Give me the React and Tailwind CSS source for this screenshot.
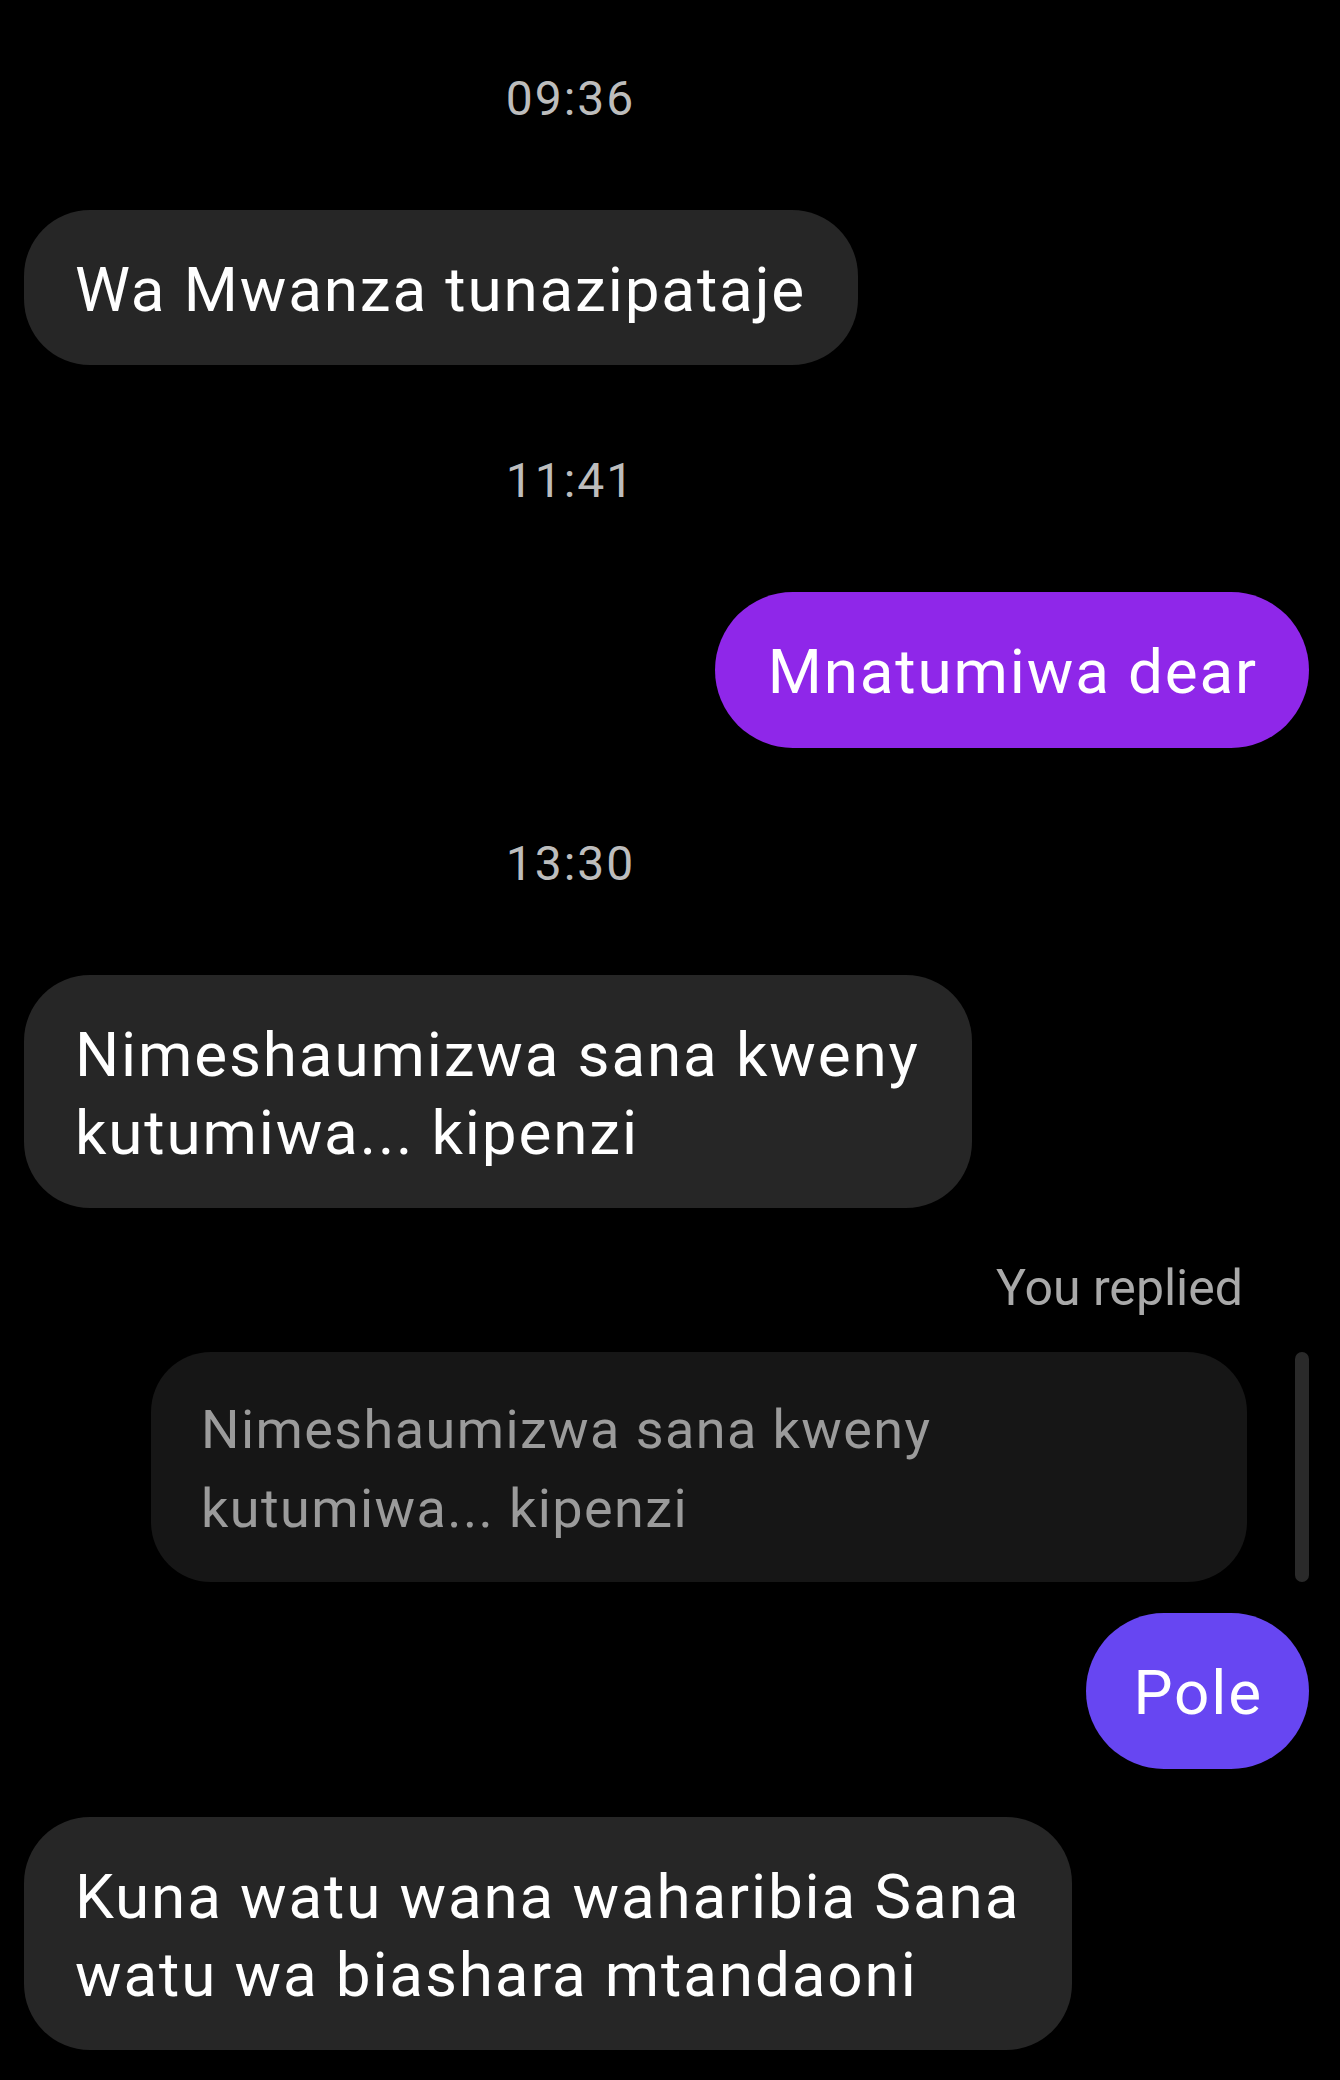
import React from 'react';

const font = { fontFamily: 'Roboto, "Noto Sans", sans-serif' };

const Stamp = ({ time, first }) => (
  <div
    className={`flex justify-center pr-[192px] h-[60px] text-[48px] leading-[60px] tracking-[2px] text-[#bdbdbd] ${first ? 'mt-[69px]' : 'mt-[86px]'} mb-[81px]`}
  >
    {time}
  </div>
);

const Incoming = ({ children }) => (
  <div className="flex justify-start">
    <div className="bg-[#262626] text-white rounded-[66px] pl-[51px] pr-[52px] pt-[41px] pb-[36px] text-[62px] leading-[78px] tracking-[0.03em] whitespace-nowrap">
      {children}
    </div>
  </div>
);

const Outgoing = ({ children, color, tight }) => (
  <div className="flex justify-end">
    <div
      className={`${color} text-white rounded-[80px] ${tight ? 'pl-[48px] pr-[46px]' : 'pl-[53px] pr-[51px]'} pt-[41px] pb-[37px] text-[62px] leading-[78px] tracking-[0.03em] whitespace-nowrap`}
    >
      {children}
    </div>
  </div>
);

export default function App() {
  return (
    <div className="min-h-[2080px] bg-black pl-[24px] pr-[31px] flex flex-col" style={font}>
      <Stamp time="09:36" first />
      <Incoming>Wa Mwanza tunazipataje</Incoming>

      <Stamp time="11:41" />
      <Outgoing color="bg-[#8f27e9]">Mnatumiwa dear</Outgoing>

      <Stamp time="13:30" />
      <Incoming>
        Nimeshaumizwa sana kweny
        <br />
        kutumiwa... kipenzi
      </Incoming>

      {/* reply block */}
      <div className="flex flex-col items-end mt-[50px]">
        <div className="pr-[66px] h-[60px] text-[50px] leading-[60px] text-[#a9a9a9]">You replied</div>
        <div className="flex items-stretch gap-[48px] mt-[34px]">
          <div className="w-[1096px] bg-[#161616] rounded-[60px] pl-[50px] pt-[38px] pb-[34px] text-[54px] leading-[79px] tracking-[0.026em] text-[#9b9b9b]">
            Nimeshaumizwa sana kweny
            <br />
            kutumiwa... kipenzi
          </div>
          <div className="w-[14px] rounded-full bg-[#2a2a2a]" />
        </div>
      </div>

      <div className="mt-[31px]">
        <Outgoing color="bg-[#6746f2]" tight>Pole</Outgoing>
      </div>

      <div className="mt-[48px]">
        <Incoming>
          Kuna watu wana waharibia Sana
          <br />
          watu wa biashara mtandaoni
        </Incoming>
      </div>
    </div>
  );
}
